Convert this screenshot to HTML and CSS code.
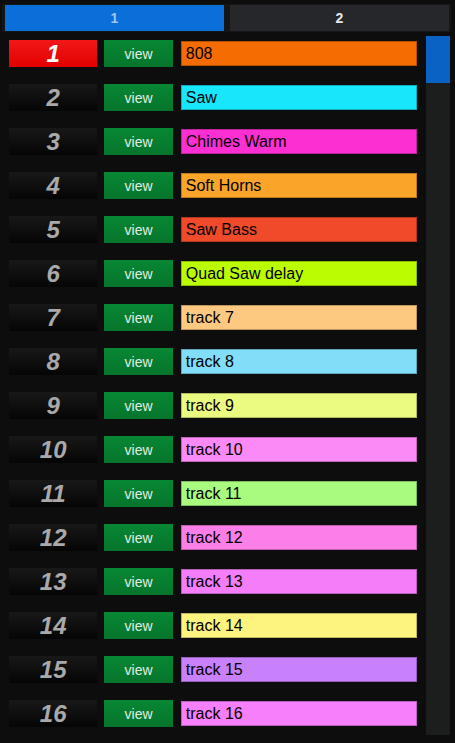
FILE: index.html
```html
<!DOCTYPE html>
<html lang="en">
<head>
    <meta charset="UTF-8">
    <title>Tracks</title>
    <link rel="stylesheet" href="styles.css">
</head>
<body>
    <div class="tabs">
        <div class="tab active">1</div>
        <div class="tab">2</div>
    </div>

    <div class="main">
        <div class="list" id="list"></div>
        <div class="scroll"><div class="thumb"></div></div>
    </div>

    <script>
        var tracks = [
            ["808", "#f56d00"], ["Saw", "#18e6fb"], ["Chimes Warm", "#fc2fd2"],
            ["Soft Horns", "#fba42a"], ["Saw Bass", "#ef4a2a"], ["Quad Saw delay", "#bcfc03"],
            ["track 7", "#fdc981"], ["track 8", "#82def8"], ["track 9", "#ebfb7f"],
            ["track 10", "#fc8af6"], ["track 11", "#a8fb7f"], ["track 12", "#fc7fe8"],
            ["track 13", "#f47ef9"], ["track 14", "#fdf37f"], ["track 15", "#c880fb"],
            ["track 16", "#f77ffb"]
        ];
        var list = document.getElementById("list");
        tracks.forEach(function (t, i) {
            var row = document.createElement("div");
            row.className = "row";
            row.innerHTML =
                '<div class="num' + (i === 0 ? ' selected' : '') + '">' + (i + 1) + '</div>' +
                '<div class="view">view</div>' +
                '<div class="name" style="background:' + t[1] + '">' + t[0] + '</div>';
            list.appendChild(row);
        });
    </script>
</body>
</html>
```

FILE: styles.css
```css
body { margin: 0; background: #0d0d0d; font-family: "Liberation Sans", Arial, sans-serif; width: 455px; height: 743px; overflow: hidden; }
.tabs { display: flex; gap: 6px; margin: 4px 4px 0 2px; padding: 1px 2px 1px 3px; background: #151515; height: 26px; }
.tab { flex: 1; background: #26272b; color: #e8e8e8; font-weight: bold; font-size: 14px; display: flex; align-items: center; justify-content: center; }
.tab.active { background: #0a6fd8; color: #9cc6f0; }
.main { display: flex; margin-top: 4px; }
.list { padding: 4px 0 0 9px; display: flex; flex-direction: column; gap: 17px; width: 408px; }
.row { display: flex; height: 27px; }
.num { width: 89px; background: linear-gradient(#181818, #050505); color: #a9a9a9; font-size: 24px; font-weight: bold; font-style: italic; display: flex; align-items: center; justify-content: center; }
.num.selected { background: linear-gradient(#f31818, #e20000); color: #fff; }
.view { width: 69px; margin-left: 7px; background: linear-gradient(#078733, #06752c); color: #e0eee4; font-size: 14px; display: flex; align-items: center; justify-content: center; }
.name { width: 232px; height: 23px; margin: 1px 0 0 8px; border: 1px solid rgba(0,0,0,0.25); color: #000; font-size: 16px; line-height: 23px; padding-left: 4px; box-sizing: content-box; }
.scroll { width: 24px; height: 699px; margin-left: 9px; background: #1c1d1d; }
.thumb { height: 47px; background: #0a63c4; }
```
